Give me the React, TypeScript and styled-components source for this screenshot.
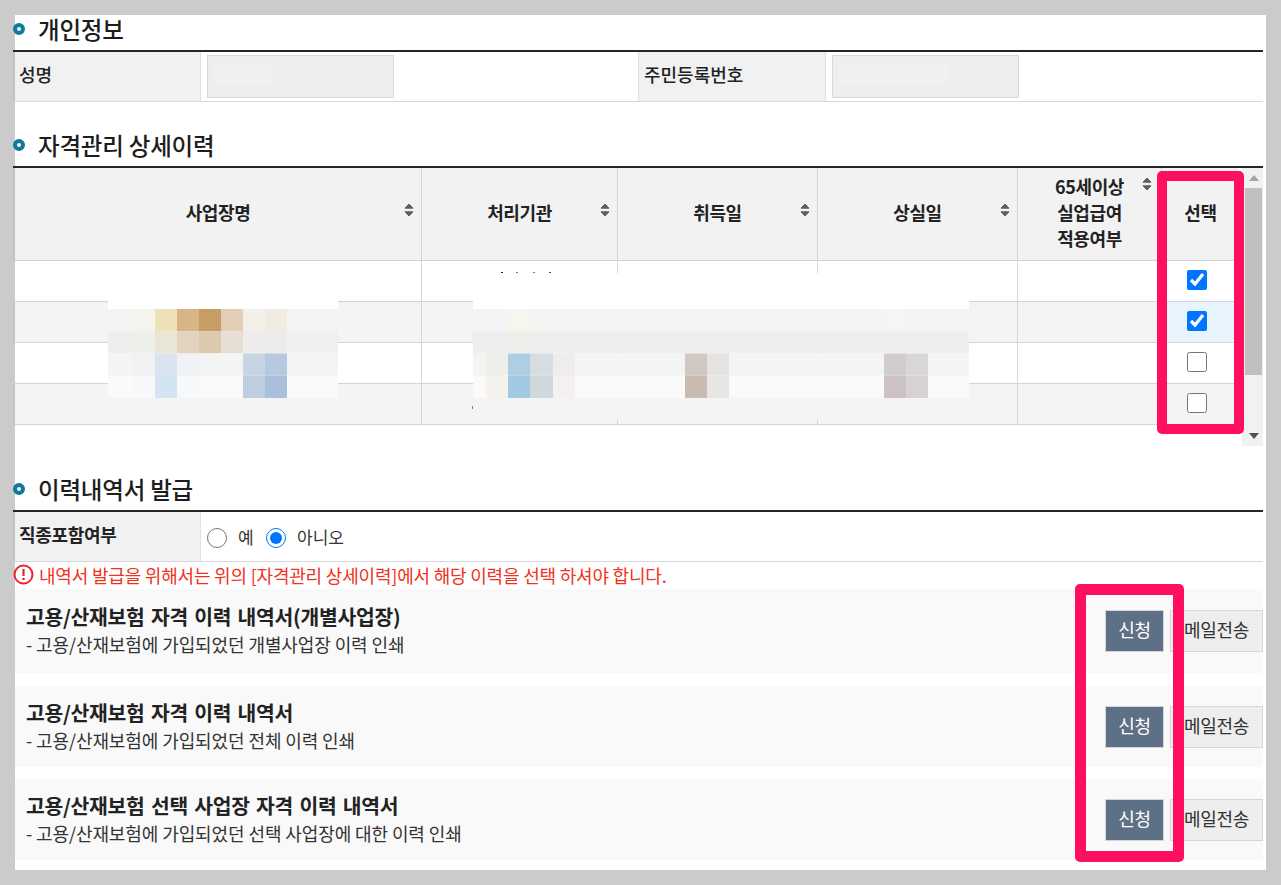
import React from "react";
import styled, { createGlobalStyle } from "styled-components";

const Global = createGlobalStyle`
  html, body { margin: 0; padding: 0; background: #cbcbcb; }
  body { font-family: "Noto Sans CJK KR", "Noto Sans", sans-serif; color: #222; overflow: hidden; }
  *, *::before, *::after { box-sizing: border-box; }
`;

const Page = styled.div`
  width: 1281px;
  height: 885px;
  padding: 15px 15px 15px 15px;
`;
const Panel = styled.main`
  width: 1251px;
  height: 855px;
  background: #fff;
`;
const Content = styled.div`
  width: 1250px;
  margin-left: -2px;
`;
const Heading = styled.h2<{ $gap?: number }>`
  display: flex;
  align-items: center;
  gap: 14px;
  height: 37px;
  margin: ${(p) => p.$gap ?? 0}px 0 0;
  padding-bottom: 7px;
  border-bottom: 2px solid #262626;
  font-size: 23.5px;
  font-weight: 500;
  letter-spacing: -0.2px;
  color: #1d1d1d;
  &::before {
    content: "";
    flex: none;
    width: 12px;
    height: 12px;
    margin-right: -1px;
    border-radius: 50%;
    border: 4px solid #0f7a9b;
    background: #fff;
  }
`;
const InfoRow = styled.div`
  display: grid;
  grid-template-columns: 188px 437px 188px 1fr;
  height: 50px;
  border-bottom: 1px solid #d8d8d8;
`;
const InfoLabel = styled.div<{ $first?: boolean }>`
  display: flex;
  align-items: center;
  padding: 0 0 5px ${(p) => (p.$first ? 4 : 5)}px;
  background: #f1f1f1;
  border-right: 1px solid #e0e0e0;
  border-left: ${(p) => (p.$first ? "2px solid #c2c2c2" : "1px solid #e0e0e0")};
  font-size: 18px;
  font-weight: 500;
`;
const InfoValue = styled.div`
  display: flex;
  align-items: center;
  padding-left: 6px;
`;
const MaskedInput = styled.div<{ $w: number }>`
  width: 187px;
  height: 43px;
  margin-bottom: 1px;
  border: 1px solid #d9d9d9;
  background: linear-gradient(#f0f0f0, #f0f0f0) no-repeat 5px 8px / ${(p) => p.$w}px 20px #eeeeee;
`;
const TableWrap = styled.div`
  position: relative;
  display: flex;
  height: 278px;
`;
const Grid = styled.div`
  display: grid;
  grid-template-columns: 409px 196px 200px 200px 144px 77px;
  grid-template-rows: 93px repeat(4, 41px);
  width: 1226px;
  align-content: start;
`;
const HeadCell = styled.div<{ $last?: boolean; $first?: boolean }>`
  position: relative;
  display: flex;
  align-items: center;
  justify-content: center;
  height: 93px;
  padding-bottom: 4px;
  background: #f2f2f2;
  border-bottom: 1px solid #d2d2d6;
  border-right: ${(p) => (p.$last ? "none" : "1px solid #d6d6d6")};
  border-left: ${(p) => (p.$first ? "2px solid #c2c2c2" : "none")};
  font-size: 18px;
  font-weight: 700;
  line-height: 26px;
  text-align: center;
  letter-spacing: -0.4px;
  color: #222;
`;
const HeadRow = styled.div`
  display: contents;
`;
const SortWrap = styled.svg<{ $top: number; $right: number }>`
  position: absolute;
  right: ${(p) => p.$right}px;
  top: ${(p) => p.$top}px;
  width: 10px;
  height: 14px;
`;
const BodyCell = styled.div<{ $alt?: boolean; $last?: boolean; $picked?: boolean; $first?: boolean }>`
  display: flex;
  align-items: center;
  justify-content: center;
  height: 41px;
  padding-right: ${(p) => (p.$last ? 8 : 0)}px;
  padding-bottom: ${(p) => (p.$last ? 3 : 0)}px;
  background: ${(p) => (p.$picked ? "#e8f4fe" : p.$alt ? "#f4f4f4" : "#fff")};
  border-bottom: 1px solid #d3d3da;
  border-right: ${(p) => (p.$last ? "none" : "1px solid #d6d6d6")};
  border-left: ${(p) => (p.$first ? `2px solid ${p.$alt ? "#c2c2c2" : "#cbcbcb"}` : "none")};
`;
const Check = styled.input.attrs({ type: "checkbox" })`
  width: 20px;
  height: 20px;
  margin: 0;
`;
const Scrollbar = styled.div`
  display: flex;
  flex-direction: column;
  align-items: stretch;
  width: 21px;
  margin-left: 3px;
  background: #f1f1f1;
`;
const ArrowBox = styled.div`
  display: flex;
  align-items: center;
  justify-content: center;
  height: 20px;
  padding-left: 3px;
`;
const Thumb = styled.div`
  height: 187px;
  margin: 0 1px 0 3px;
  background: #c0c0c0;
`;
const ScrollRest = styled.div`
  flex: 1;
`;
const Mosaic1 = styled.svg`
  position: absolute;
  left: 95px;
  top: 133px;
  width: 230px;
  height: 97px;
`;
const Mosaic2 = styled.svg`
  position: absolute;
  left: 459px;
  top: 104px;
  width: 497px;
  height: 148px;
`;
const Callout = styled.div<{ $l: number; $t: number; $w: number; $h: number; $b: number }>`
  position: absolute;
  left: ${(p) => p.$l}px;
  top: ${(p) => p.$t}px;
  width: ${(p) => p.$w}px;
  height: ${(p) => p.$h}px;
  border: ${(p) => p.$b}px solid #ff0f5f;
  border-radius: 5px;
  pointer-events: none;
`;
const OptionRow = styled.div`
  display: grid;
  grid-template-columns: 188px 1fr;
  height: 50px;
  border-bottom: 1px solid #d8d8d8;
`;
const OptionLabel = styled.div`
  display: flex;
  align-items: center;
  padding: 0 0 5px 4px;
  background: #f1f1f1;
  border-right: 1px solid #e0e0e0;
  border-left: 2px solid #c2c2c2;
  font-size: 18px;
  font-weight: 700;
  letter-spacing: -0.3px;
`;
const OptionValue = styled.div`
  display: flex;
  align-items: center;
  padding: 2px 0 0 6px;
  font-size: 17px;
  color: #333;
`;
const Radio = styled.input.attrs({ type: "radio", name: "job" })`
  width: 20px;
  height: 20px;
  margin: 0;
`;
const RadioText = styled.label<{ $w: number }>`
  width: ${(p) => p.$w}px;
  padding-left: 11px;
  margin-top: -3px;
`;
const Warning = styled.p`
  display: flex;
  align-items: center;
  gap: 5px;
  height: 27px;
  margin: 0;
  padding-bottom: 2px;
  font-size: 18px;
  letter-spacing: -0.2px;
  color: #f0311b;
`;
const WarnIcon = styled.svg`
  width: 21px;
  height: 21px;
  flex: none;
`;
const Cards = styled.div`
  position: relative;
`;
const Card = styled.section<{ $h: number; $gap: number }>`
  display: flex;
  align-items: center;
  justify-content: space-between;
  height: ${(p) => p.$h}px;
  margin: ${(p) => p.$gap}px 0 0 2px;
  padding-left: 11px;
  background: #f9f9f9;
`;
const CardText = styled.div`
  display: flex;
  flex-direction: column;
  padding-bottom: 2px;
`;
const CardTitle = styled.h3`
  margin: 0;
  font-size: 20.4px;
  font-weight: 700;
  line-height: 29px;
  letter-spacing: -0.27px;
  word-spacing: 2px;
  color: #222;
`;
const CardDesc = styled.p`
  margin: 0;
  font-size: 18px;
  line-height: 27px;
  letter-spacing: -0.1px;
  color: #333;
`;
const Actions = styled.div`
  display: flex;
  gap: 6px;
`;
const Button = styled.button<{ $primary?: boolean }>`
  width: ${(p) => (p.$primary ? 59 : 93)}px;
  height: 42px;
  padding: 0 0 4px;
  border: 1px solid #d6d6d6;
  background: ${(p) => (p.$primary ? "#5d7085" : "#eeeeee")};
  color: ${(p) => (p.$primary ? "#fff" : "#333")};
  font-family: inherit;
  font-size: 18px;
  letter-spacing: -0.3px;
`;

const Sort = ({ top, right = 7 }: { top: number; right?: number }) => (
  <SortWrap $top={top} $right={right} viewBox="0 0 10 14">
    <path
      d="M5 1 L9 5.2 H1 Z M1 8.8 H9 L5 13 Z"
      fill="#5f5f5f"
      stroke="#5f5f5f"
      strokeWidth="1"
      strokeLinejoin="round"
    />
  </SortWrap>
);

const Bands = ({ edges, bands, y, h, x0 }: { edges: number[]; bands: string[][]; y: number; h: number; x0: number }) => (
  <>
    {bands.map((row, r) =>
      row.map((c, i) => (
        <rect key={`${r}-${i}`} x={edges[i] - x0} y={y + r * h} width={edges[i + 1] - edges[i]} height={h} fill={c} />
      ))
    )}
  </>
);

const e1 = [108, 133, 155, 177, 199, 221, 243, 265, 287, 338];
const b1 = [
  ["#f4f4f4", "#f4f3ee", "#eee1b8", "#d8b587", "#c69d63", "#e3cfb7", "#f3efe9", "#f1ebe4", "#f4f4f4"],
  ["#eeeeee", "#eeeeea", "#eae6d7", "#e2d3c0", "#dccab0", "#e7dfd6", "#eeecea", "#edebe9", "#efefef"],
  ["#f3f4f4", "#f1f2f4", "#d9e4f0", "#f0f2f5", "#f3f5f5", "#f3f5f5", "#c7d4e3", "#b7c9de", "#f3f5f4"],
  ["#fafafa", "#f6f8fa", "#d4e3f2", "#f6f8fb", "#fafafa", "#fafafa", "#bdcee1", "#aabfd9", "#fafafa"],
];
const e2 = [473, 486, 508, 530, 553, 575, 685, 707, 729, 884, 906, 928, 969];
const b2 = [
  ["#f4f4f4", "#f4f4f4", "#f6f6ef", "#f4f4f3", "#f4f4f4", "#f4f4f4", "#f4f4f3", "#f4f4f3", "#f4f4f4", "#f5f5f3", "#f4f4f4", "#f4f4f4"],
  ["#eeeeee", "#eeeeee", "#efefe9", "#eeeeee", "#eeeeee", "#eeeeee", "#eeeeee", "#eeeeee", "#eeeeee", "#eeeeee", "#eeeeee", "#eeeeee"],
  ["#f4f4f3", "#efeeea", "#aecee3", "#d6dcdf", "#eeecec", "#f3f5f4", "#d1c8c4", "#e5e3e1", "#f3f5f4", "#d1cccd", "#d9d6d7", "#f3f5f4"],
  ["#fafafa", "#f5f2ee", "#a2c8e3", "#d1d8dd", "#f3f0ef", "#fafafa", "#c9bbb2", "#e9e5e2", "#fafafa", "#ccc1c5", "#d6d2d3", "#fafafa"],
];

const rows = [
  { alt: false, picked: false, checked: true },
  { alt: true, picked: true, checked: true },
  { alt: false, picked: false, checked: false },
  { alt: true, picked: false, checked: false },
];

const cards = [
  { h: 84, gap: 0, title: "고용/산재보험 자격 이력 내역서(개별사업장)", desc: "- 고용/산재보험에 가입되었던 개별사업장 이력 인쇄" },
  { h: 81, gap: 13, title: "고용/산재보험 자격 이력 내역서", desc: "- 고용/산재보험에 가입되었던 전체 이력 인쇄" },
  { h: 81, gap: 12, title: "고용/산재보험 선택 사업장 자격 이력 내역서", desc: "- 고용/산재보험에 가입되었던 선택 사업장에 대한 이력 인쇄" },
];

export default function App() {
  return (
    <Page>
      <Global />
      <Panel>
        <Content>
          <Heading>개인정보</Heading>
          <InfoRow>
            <InfoLabel $first>성명</InfoLabel>
            <InfoValue><MaskedInput $w={60} /></InfoValue>
            <InfoLabel>주민등록번호</InfoLabel>
            <InfoValue><MaskedInput $w={110} /></InfoValue>
          </InfoRow>

          <Heading $gap={29}>자격관리 상세이력</Heading>
          <TableWrap>
            <Grid>
              <HeadRow>
                <HeadCell $first>사업장명<Sort top={35} /></HeadCell>
                <HeadCell>처리기관<Sort top={35} /></HeadCell>
                <HeadCell>취득일<Sort top={35} /></HeadCell>
                <HeadCell>상실일<Sort top={35} /></HeadCell>
                <HeadCell>65세이상<br />실업급여<br />적용여부<Sort top={9} right={9} /></HeadCell>
                <HeadCell $last>선택</HeadCell>
              </HeadRow>
              {rows.map((r, i) => (
                <React.Fragment key={i}>
                  <BodyCell $alt={r.alt} $first />
                  <BodyCell $alt={r.alt} />
                  <BodyCell $alt={r.alt} />
                  <BodyCell $alt={r.alt} />
                  <BodyCell $alt={r.alt} />
                  <BodyCell $alt={r.alt} $picked={r.picked} $last>
                    <Check defaultChecked={r.checked} />
                  </BodyCell>
                </React.Fragment>
              ))}
            </Grid>
            <Scrollbar>
              <ArrowBox>
                <svg width="10" height="6" viewBox="0 0 10 6"><path d="M5 0 L10 6 H0 Z" fill="#a3a3a3" /></svg>
              </ArrowBox>
              <Thumb />
              <ScrollRest />
              <ArrowBox>
                <svg width="10" height="6" viewBox="0 0 10 6"><path d="M0 0 H10 L5 6 Z" fill="#505050" /></svg>
              </ArrowBox>
            </Scrollbar>

            <Mosaic1 viewBox="0 0 230 97">
              <rect width="230" height="8" fill="#fff" />
              <Bands edges={e1} bands={b1} y={8} h={22.25} x0={108} />
            </Mosaic1>
            <Mosaic2 viewBox="0 0 497 148">
              <rect x="1" y="1" width="496" height="36" fill="#fff" />
              <Bands edges={e2} bands={b2} y={37} h={22.25} x0={472} />
              <rect x="1" y="126" width="496" height="22" fill="#f4f4f4" />
              <rect x="29" y="0" width="2" height="1" fill="#222" />
              <rect x="44" y="0" width="2" height="1" fill="#c26a1e" />
              <rect x="61" y="0" width="2" height="1" fill="#2f8fd8" />
              <rect x="77" y="0" width="2" height="1" fill="#444" />
              <rect x="0" y="134" width="1" height="3" fill="#c26a1e" />
            </Mosaic2>
            <Callout $l={1144} $t={3} $w={87} $h={263} $b={10} />
          </TableWrap>

          <Heading $gap={29}>이력내역서 발급</Heading>
          <OptionRow>
            <OptionLabel>직종포함여부</OptionLabel>
            <OptionValue>
              <Radio />
              <RadioText $w={39}>예</RadioText>
              <Radio defaultChecked />
              <RadioText $w={80}>아니오</RadioText>
            </OptionValue>
          </OptionRow>
          <Warning>
            <WarnIcon viewBox="0 0 21 21">
              <circle cx="10.5" cy="10.5" r="9" fill="#fff" stroke="#e5262d" strokeWidth="2" />
              <path d="M10.5 5 V12" stroke="#e5262d" strokeWidth="2.2" />
              <circle cx="10.5" cy="15" r="1.3" fill="#e5262d" />
            </WarnIcon>
            내역서 발급을 위해서는 위의 [자격관리 상세이력]에서 해당 이력을 선택 하셔야 합니다.
          </Warning>
          <Cards>
            {cards.map((c) => (
              <Card key={c.title} $h={c.h} $gap={c.gap}>
                <CardText>
                  <CardTitle>{c.title}</CardTitle>
                  <CardDesc>{c.desc}</CardDesc>
                </CardText>
                <Actions>
                  <Button $primary>신청</Button>
                  <Button>메일전송</Button>
                </Actions>
              </Card>
            ))}
            <Callout $l={1062} $t={-5} $w={109} $h={278} $b={11} />
          </Cards>
        </Content>
      </Panel>
    </Page>
  );
}
